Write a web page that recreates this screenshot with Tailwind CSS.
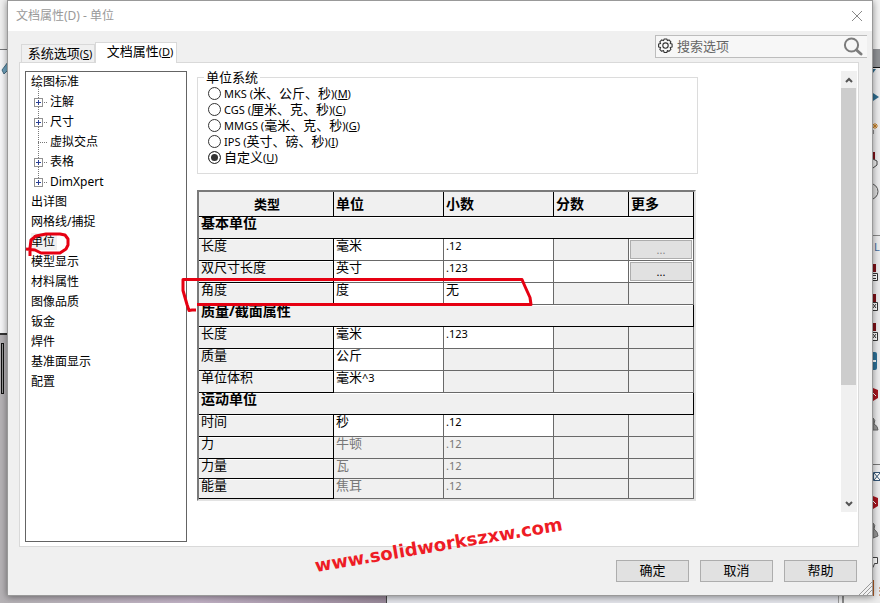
<!DOCTYPE html>
<html lang="zh-CN">
<head>
  <meta charset="UTF-8">
  <meta name="viewport" content="width=device-width, initial-scale=1.0">
  <title>文档属性(D) - 单位</title>
  <script src="https://cdn.jsdelivr.net/npm/@tailwindcss/browser@4"></script>
</head>
<body class="min-h-screen grid grid-cols-[7px_1fr_7px] grid-rows-[1fr_7px] overflow-hidden bg-[#e9e9ea] text-[13px] text-black font-['Noto_Sans','Noto_Sans_CJK_SC',sans-serif]">

  <!-- Left edge of the main window -->
  <div class="overflow-hidden contain-size bg-[#b5b2b5]">
    <svg width="7" height="603" viewBox="0 0 7 603">
      <rect width="7" height="49" fill="#f0f0f0"/>
      <rect y="49" width="7" height="1" fill="#77787a"/>
      <rect y="50" width="7" height="283" fill="#f6f6f8"/>
      <path d="M2 70l6-8v8l-4 4z" fill="#6fa3bf" stroke="#446b80" stroke-width="1"/>
      <rect y="333" width="7" height="2" fill="#333"/>
      <rect x="1.5" y="343.5" width="2" height="50" fill="#999" stroke="#111"/>
    </svg>
  </div>

  <!-- Dialog -->
  <div class="relative z-10 min-w-0 flex flex-col bg-[#f0f0f0] border border-[#999] shadow-[0_1px_7px_rgba(0,0,0,0.45)]">

    <!-- Title bar -->
    <div class="h-[30px] shrink-0 bg-white flex items-center justify-between pl-2 pr-[9px]">
      <h1 class="text-xs text-[#999]">文档属性(D) - 单位</h1>
      <button type="button" aria-label="关闭" class="block">
        <svg width="12" height="12" viewBox="0 0 12 12" fill="none" stroke="#888" stroke-width="1"><path d="M1 1l10 10M11 1L1 11"/></svg>
      </button>
    </div>

    <!-- Tabs and search -->
    <div class="h-[31px] shrink-0 flex items-end pl-[13px] pr-[5px]">
      <div class="flex items-end grow" role="tablist">
        <button type="button" role="tab" aria-selected="false" class="h-[18px] w-[74px] border border-b-0 border-[#d9d9d9] leading-4 whitespace-nowrap pl-1">系统选项<span class="text-[11px]">(<u>S</u>)</span></button>
        <button type="button" role="tab" aria-selected="true" class="relative z-10 h-[21px] w-[82px] -mb-px bg-white border border-b-0 border-[#d9d9d9] leading-4 whitespace-nowrap pl-2 pb-1">文档属性<span class="text-[11px]">(<u>D</u>)</span></button>
      </div>
      <label class="w-[212px] h-[23px] mb-1 flex items-center pl-px pr-1 bg-[#f7f7f7] border border-r-0 border-[#bdbdbd]">
        <svg class="shrink-0" width="17" height="17" viewBox="0 0 17 17" fill="none" stroke="#333" stroke-width="1.1" stroke-linejoin="round">
          <path d="M7.2 1h2.6l.6 1.6 1.6-.7 1.9 1.9-.7 1.6 1.9.7v2.8l-1.9.7.7 1.8-1.9 1.9-1.6-.7-.6 1.9H7.2l-.7-1.9-1.8.7-1.9-1.9.8-1.8-2-.7V6.1l2-.7-.8-1.6 1.9-1.9 1.8.7z"/>
          <circle cx="8.5" cy="7.6" r="2.7"/>
        </svg>
        <input type="text" aria-label="搜索选项" placeholder="搜索选项" class="grow min-w-0 pl-[3px] pb-0.5 leading-4 bg-transparent outline-none placeholder:text-[#666]">
        <svg class="shrink-0" width="20" height="20" viewBox="0 0 20 20" fill="none" stroke="#7c7c7c"><circle cx="8.5" cy="8" r="6.6" stroke-width="2"/><path d="M13.500 13l4.500 4" stroke-width="3" stroke-linecap="round"/></svg>
      </label>
    </div>

    <!-- Page -->
    <div class="grow flex ml-[11px] mr-[13px] pt-2 pl-[5px] pr-px pb-1 bg-white border border-[#d9d9d9]">

      <!-- Category tree -->
      <ul class="w-[162px] shrink-0 border border-[#646464] pl-[5px] text-xs leading-5">
        <li>绘图标准
          <ul class="relative pl-[19px] before:absolute before:left-[7px] before:-top-2.5 before:h-[100px] before:border-l before:border-dotted before:border-[#777]">
            <li class="flex items-center"><svg class="relative -ml-4" width="16" height="9" viewBox="0 0 16 9"><rect x=".5" y=".5" width="8" height="8" fill="#fff" stroke="#919191"/><path d="M2 4.5h5M4.5 2v5" stroke="#2b3f94"/><path d="M10 4.5h4" stroke="#777" stroke-dasharray="1 1"/></svg>注解</li>
            <li class="flex items-center"><svg class="relative -ml-4" width="16" height="9" viewBox="0 0 16 9"><rect x=".5" y=".5" width="8" height="8" fill="#fff" stroke="#919191"/><path d="M2 4.5h5M4.5 2v5" stroke="#2b3f94"/><path d="M10 4.5h4" stroke="#777" stroke-dasharray="1 1"/></svg>尺寸</li>
            <li class="flex items-center"><svg class="relative -ml-4" width="16" height="9" viewBox="0 0 16 9"><path d="M4 4.5h10" stroke="#777" stroke-dasharray="1 1"/></svg>虚拟交点</li>
            <li class="flex items-center"><svg class="relative -ml-4" width="16" height="9" viewBox="0 0 16 9"><rect x=".5" y=".5" width="8" height="8" fill="#fff" stroke="#919191"/><path d="M2 4.5h5M4.5 2v5" stroke="#2b3f94"/><path d="M10 4.5h4" stroke="#777" stroke-dasharray="1 1"/></svg>表格</li>
            <li class="flex items-center"><svg class="relative -ml-4" width="16" height="9" viewBox="0 0 16 9"><rect x=".5" y=".5" width="8" height="8" fill="#fff" stroke="#919191"/><path d="M2 4.5h5M4.5 2v5" stroke="#2b3f94"/><path d="M10 4.5h4" stroke="#777" stroke-dasharray="1 1"/></svg>DimXpert</li>
          </ul>
        </li>
        <li>出详图</li>
        <li>网格线/捕捉</li>
        <li><span class="bg-[#f0f0f0] pr-0.5">单位</span></li>
        <li>模型显示</li>
        <li>材料属性</li>
        <li>图像品质</li>
        <li>钣金</li>
        <li>焊件</li>
        <li>基准面显示</li>
        <li>配置</li>
      </ul>

      <!-- Options -->
      <div class="grow min-w-0 pl-[10px]">
        <fieldset class="max-w-[501px] border border-[#dcdcdc] pt-0.5 pb-2 pl-[10px] leading-4">
          <legend class="-ml-1 px-0.5 leading-3">单位系统</legend>
          <label class="h-4 flex items-center gap-[3px] whitespace-nowrap"><input type="radio" name="system" class="appearance-none size-[13px] rounded-full border border-[#333] bg-white checked:bg-[#333] checked:shadow-[inset_0_0_0_2px_#fff]"><span><span class="text-[11px] leading-3">MKS (</span>米、公斤、秒<span class="text-[11px] leading-3">)(<u>M</u>)</span></span></label>
          <label class="h-4 flex items-center gap-[3px] whitespace-nowrap"><input type="radio" name="system" class="appearance-none size-[13px] rounded-full border border-[#333] bg-white checked:bg-[#333] checked:shadow-[inset_0_0_0_2px_#fff]"><span><span class="text-[11px] leading-3">CGS (</span>厘米、克、秒<span class="text-[11px] leading-3">)(<u>C</u>)</span></span></label>
          <label class="h-4 flex items-center gap-[3px] whitespace-nowrap"><input type="radio" name="system" class="appearance-none size-[13px] rounded-full border border-[#333] bg-white checked:bg-[#333] checked:shadow-[inset_0_0_0_2px_#fff]"><span><span class="text-[11px] leading-3">MMGS (</span>毫米、克、秒<span class="text-[11px] leading-3">)(<u>G</u>)</span></span></label>
          <label class="h-4 flex items-center gap-[3px] whitespace-nowrap"><input type="radio" name="system" class="appearance-none size-[13px] rounded-full border border-[#333] bg-white checked:bg-[#333] checked:shadow-[inset_0_0_0_2px_#fff]"><span><span class="text-[11px] leading-3">IPS (</span>英寸、磅、秒<span class="text-[11px] leading-3">)(<u>I</u>)</span></span></label>
          <label class="h-4 flex items-center gap-[3px] whitespace-nowrap"><input type="radio" name="system" checked class="appearance-none size-[13px] rounded-full border border-[#333] bg-white checked:bg-[#333] checked:shadow-[inset_0_0_0_2px_#fff]"><span>自定义<span class="text-[11px] leading-3">(<u>U</u>)</span></span></label>
        </fieldset>

        <div class="max-w-[499px] mt-4 border-2 border-t-[#7a7a7a] border-l-[#7a7a7a] border-r-[#e3e3e3] border-b-[#e3e3e3]">
          <table class="w-full table-fixed border-separate border-spacing-0 text-left leading-3 [&_td]:p-0 [&_td]:pl-0.5 [&_td]:align-top [&_td]:border-r [&_td]:border-b [&_td]:border-[#696969] [&_th]:p-0 [&_th]:pl-0.5 [&_th]:border-r [&_th]:border-b [&_th]:border-black [&_th]:bg-[#f0f0f0] [&_tbody_th]:align-top [&_tbody_th]:shadow-[inset_0_1px_0_#fff]">
            <colgroup>
              <col class="w-[135px]"><col class="w-[110px]"><col class="w-[110px]"><col class="w-[75px]"><col class="w-[65px]">
            </colgroup>
            <thead>
              <tr class="h-[25px]"><th class="text-center">类型</th><th class="text-sm leading-4">单位</th><th class="text-sm leading-4">小数</th><th class="text-sm leading-4">分数</th><th class="text-sm leading-4">更多</th></tr>
            </thead>
            <tbody>
              <tr class="h-[22px]"><th colspan="5" class="text-sm leading-3">基本单位</th></tr>
              <tr class="h-[22px]"><th class="font-normal">长度</th><td>毫米</td><td><span class="text-[11px]">.12</span></td><td class="bg-[#f0f0f0]"></td><td><button type="button" disabled class="mt-px -ml-px block w-[62px] h-[19px] border border-[#adadad] bg-[#e1e1e1] text-[11px] leading-4 text-[#888]">...</button></td></tr>
              <tr class="h-[22px]"><th class="font-normal">双尺寸长度</th><td>英寸</td><td><span class="text-[11px]">.123</span></td><td></td><td><button type="button" class="mt-px -ml-px block w-[62px] h-[19px] border border-[#adadad] bg-[#e1e1e1] text-[11px] leading-4">...</button></td></tr>
              <tr class="h-[22px]"><th class="font-normal">角度</th><td>度</td><td>无</td><td class="bg-[#f0f0f0]"></td><td class="bg-[#f0f0f0]"></td></tr>
              <tr class="h-[22px]"><th colspan="5" class="text-sm leading-3">质量/截面属性</th></tr>
              <tr class="h-[22px]"><th class="font-normal">长度</th><td>毫米</td><td><span class="text-[11px]">.123</span></td><td class="bg-[#f0f0f0]"></td><td class="bg-[#f0f0f0]"></td></tr>
              <tr class="h-[22px]"><th class="font-normal">质量</th><td>公斤</td><td class="bg-[#f0f0f0]"></td><td class="bg-[#f0f0f0]"></td><td class="bg-[#f0f0f0]"></td></tr>
              <tr class="h-[22px]"><th class="font-normal">单位体积</th><td>毫米<span class="text-[11px]">^3</span></td><td class="bg-[#f0f0f0]"></td><td class="bg-[#f0f0f0]"></td><td class="bg-[#f0f0f0]"></td></tr>
              <tr class="h-[22px]"><th colspan="5" class="text-sm leading-3">运动单位</th></tr>
              <tr class="h-[22px]"><th class="font-normal">时间</th><td>秒</td><td><span class="text-[11px]">.12</span></td><td class="bg-[#f0f0f0]"></td><td class="bg-[#f0f0f0]"></td></tr>
              <tr class="h-[22px] bg-[#f0f0f0] text-[#777]"><th class="font-normal text-black">力</th><td>牛顿</td><td><span class="text-[11px]">.12</span></td><td></td><td></td></tr>
              <tr class="h-5 bg-[#f0f0f0] text-[#777]"><th class="font-normal text-black">力量</th><td>瓦</td><td><span class="text-[11px]">.12</span></td><td></td><td></td></tr>
              <tr class="h-5 bg-[#f0f0f0] text-[#777]"><th class="font-normal text-black">能量</th><td>焦耳</td><td><span class="text-[11px]">.12</span></td><td></td><td></td></tr>
            </tbody>
          </table>
        </div>
      </div>

      <!-- Scrollbar -->
      <div class="w-4 shrink-0 mb-[30px] flex flex-col bg-[#f0f0f0]">
        <button type="button" aria-label="向上滚动" class="h-[17px] flex items-center justify-center"><svg width="8" height="6" viewBox="0 0 8 6" fill="none" stroke="#555" stroke-width="2"><path d="M1 5l3-3 3 3"/></svg></button>
        <div class="grow"><div class="h-[73%] w-[15px] bg-[#cdcdcd]"></div></div>
        <button type="button" aria-label="向下滚动" class="h-[17px] flex items-center justify-center"><svg width="8" height="6" viewBox="0 0 8 6" fill="none" stroke="#555" stroke-width="2"><path d="M1 1l3 3 3-3"/></svg></button>
      </div>
    </div>

    <!-- Footer buttons -->
    <div class="h-12 shrink-0 flex justify-end gap-[11px] pt-[13px] pr-[15px]">
      <button type="button" class="w-[73px] h-[22px] pb-0.5 border border-[#adadad] bg-[#e1e1e1] leading-4">确定</button>
      <button type="button" class="w-[73px] h-[22px] pb-0.5 border border-[#adadad] bg-[#e1e1e1] leading-4">取消</button>
      <button type="button" class="w-[73px] h-[22px] pb-0.5 border border-[#adadad] bg-[#e1e1e1] leading-4">帮助</button>
    </div>
    <svg class="absolute right-0 bottom-0" width="13" height="13" viewBox="0 0 13 13" fill="none" stroke="#999"><path d="M0 13L13 0M4 13l9-9M8 13l5-5"/></svg>
  </div>

  <!-- Right edge of the main window -->
  <div class="overflow-hidden contain-size bg-[#ededee]">
    <svg width="7" height="603" viewBox="0 0 7 603">
      <rect width="7" height="49" fill="#f3f3f3"/>
      <rect y="49" width="7" height="18" fill="#909296"/>
      <rect y="67" width="7" height="1" fill="#111"/>
      <path d="M0 69h3l-3 4zM0 93l6 4-6 4z" fill="#2f6c8e"/>
      <path d="M2 123v6M-1 126h6M0 124l4 4M4 124l-4 4" stroke="#c37b1f"/>
      <path d="M0 130v4" stroke="#333"/>
      <path d="M0 152h2v8h-2z" fill="#7d1017"/>
      <path d="M0 159l4 2v4l-4 3" fill="#eee" stroke="#444"/>
      <circle cx="-3" cy="191.500" r="8" fill="#ddd" stroke="#555"/>
      <rect y="235" width="7" height="1" fill="#888"/>
      <text x="1" y="251" font-size="11" fill="#456b9c">L</text>
      <path d="M0 264h3v8h-3zM0 294h3v8h-3zM0 323h3v8h-3z" fill="#7d1017"/>
      <path d="M-2.500 273.500h7v7h-7zM-2.500 302.500h7v8h-7zM-2.500 332.500h7v8h-7z" fill="#fff" stroke="#333"/>
      <path d="M0 275.500h3M0 278.500h3M0 304l3 4M3 304l-3 4M0 334l3 4M3 334l-3 4" stroke="#333"/>
      <rect x="-4" y="352" width="8" height="18" rx="2" fill="#2e7198"/>
      <path d="M0 361h3" stroke="#fff" stroke-width="2"/>
      <path d="M0 388l5 2v8l-5 3zM0 496l5 2v8l-5 3z" fill="#a5141e"/>
      <path d="M0 393l3 3M0 501l3 3" stroke="#fff"/>
      <path d="M0 418q3 2 1 6 4 2 4 6h-5zM0 523q3 2 1 6 4 3 4 7l-5 2z" fill="#999" stroke="#666"/>
      <rect y="464" width="7" height="1" fill="#777"/>
      <path d="M.5 472.500h8v8h-8zM1 473l6 7M7 473l-6 7" fill="#fff" stroke="#357"/>
      <path d="M0 557.500h4.500v6h-3l-1.500 4" fill="#fff" stroke="#444"/>
      <rect y="580" width="1" height="16" fill="#b05a24"/>
      <path d="M6 588h1M6 591h1M6 595h1" stroke="#b05a24"/>
    </svg>
  </div>

  <!-- Bottom edge of the main window -->
  <div class="col-span-3 flex">
    <div class="w-[44%] bg-linear-to-r from-[#b5b2b5] via-[#c2b2c6] to-[#9a8a9b] border-r border-[#444]"></div>
    <div class="grow bg-[#e3e4ea] border-r border-[#999]"></div>
    <div class="w-[38px] ml-[3px] bg-[#ececec] border-l-2 border-[#888]"></div>
  </div>

  <!-- Pen marks and site name over the dialog -->
  <svg class="absolute left-0 top-0 z-20 pointer-events-none" width="880" height="603" viewBox="0 0 880 603">
    <g fill="none" stroke="#e60012" stroke-width="3" stroke-linejoin="round">
      <path d="M26 249l9 1 6 3h19l6-4 2-4v-6l-3-4-5-1H46l-10 2-5 4-1 8v8"/>
      <path d="M197 304.500H531l-1-7-5-11-3-7H183v11l4 14 2 6 3-.5h4"/>
    </g>
    <text transform="translate(316 572) rotate(-9.600)" font-family="DejaVu Sans" font-weight="bold" font-size="18" fill="#ee1c25">www.solidworkszxw.com</text>
  </svg>

</body>
</html>
